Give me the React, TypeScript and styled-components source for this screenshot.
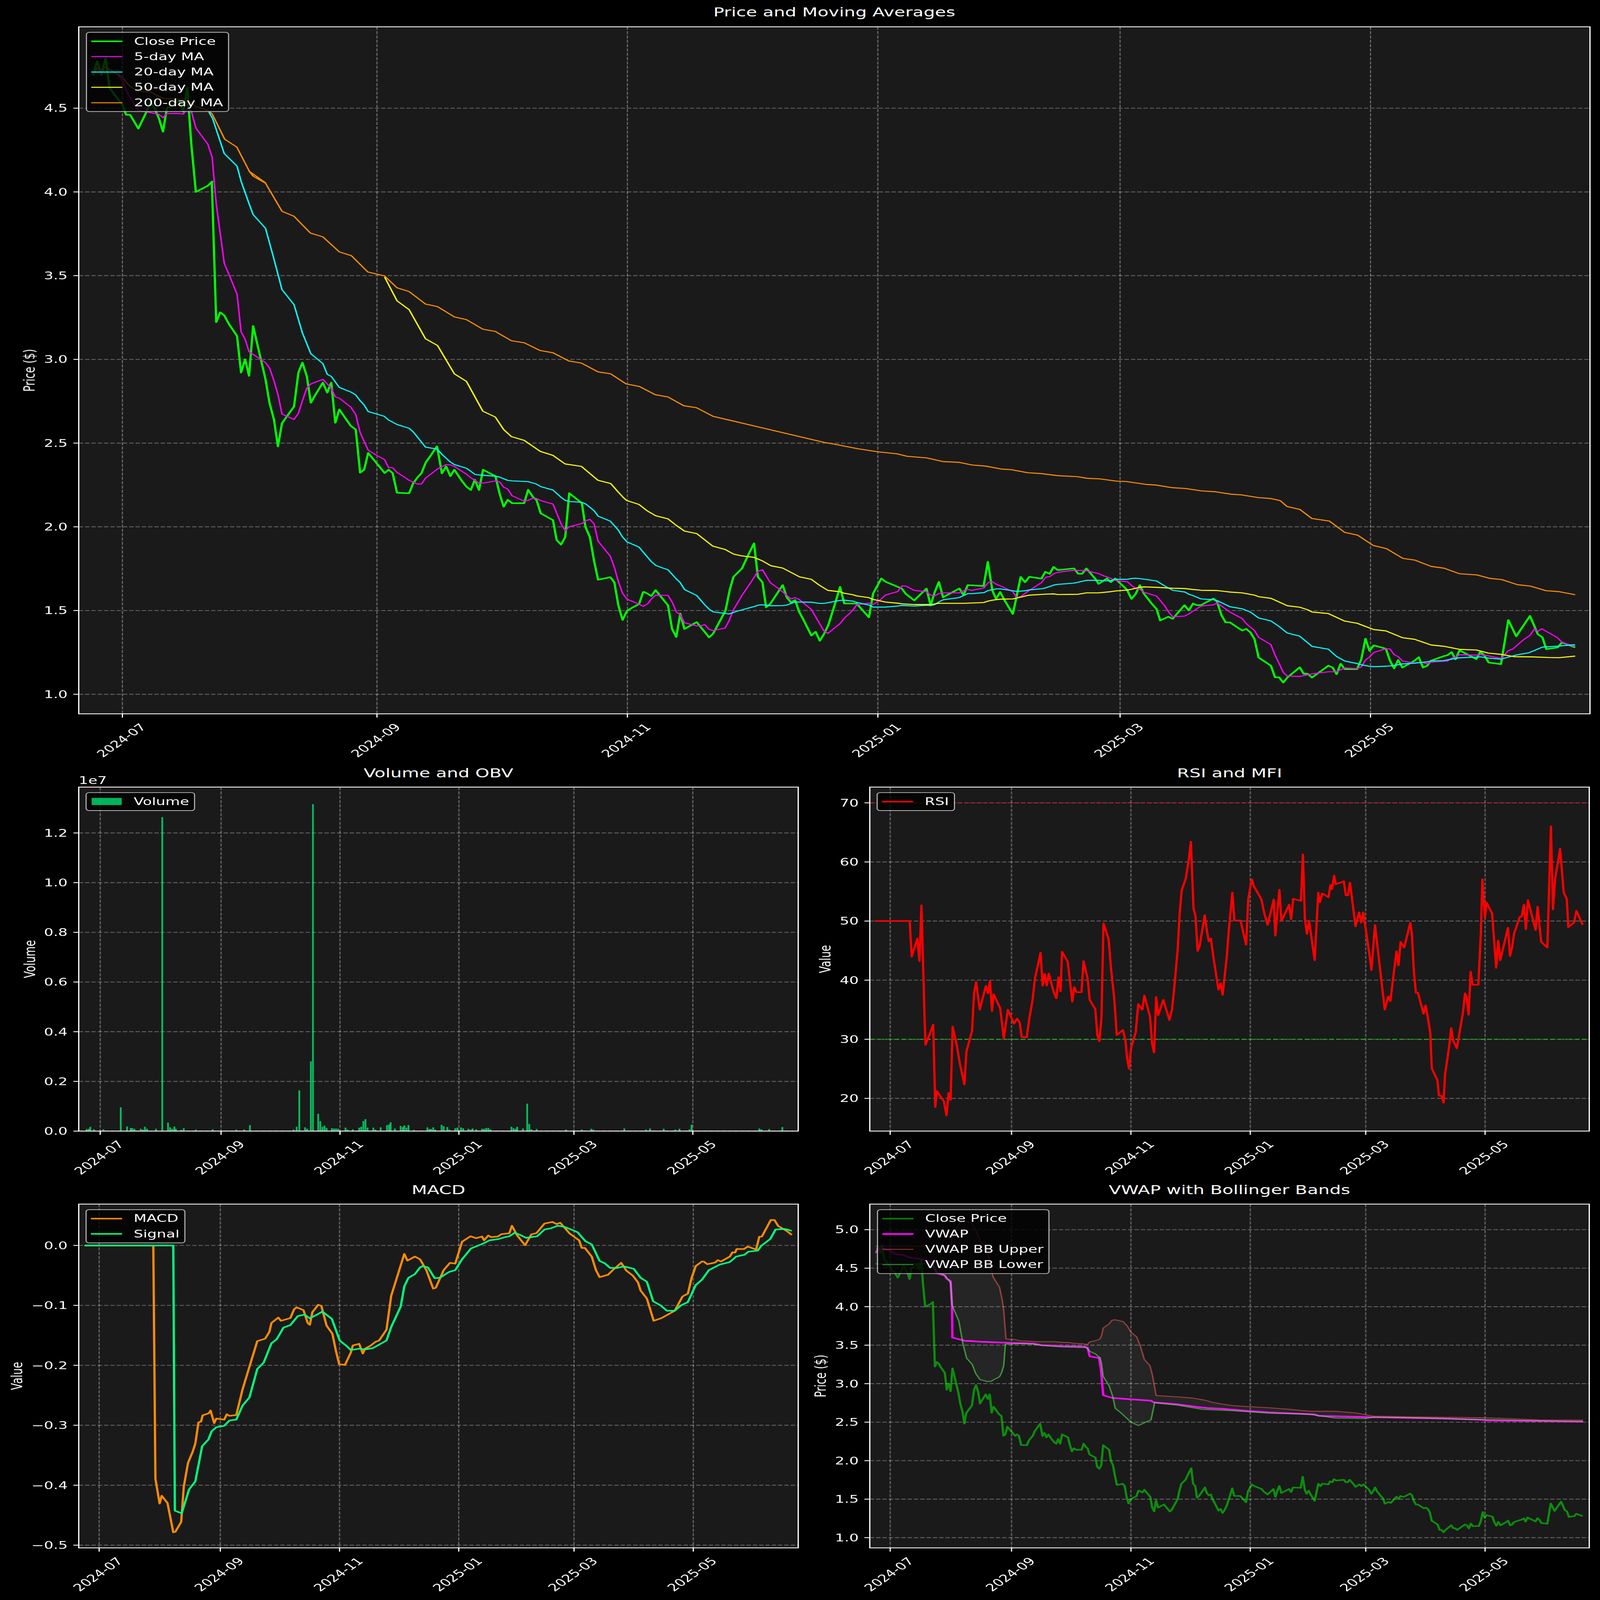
import type { ReactNode } from 'react';
import styled, { createGlobalStyle } from 'styled-components';

type Pt = [number, number];

const DESIGN_WIDTH = 4470;
const DESIGN_HEIGHT = 6507;

// Series are traced off the source figure, in page pixels. Each view is a crop with its own scale.
const view = (ox: number, oy: number, sx: number, sy: number) => (pts: string): Pt[] =>
  pts
    .trim()
    .split(/\s+/)
    .map(p => {
      const [x, y] = p.split(',').map(Number);
      return [ox + x / sx, oy + y / sy] as Pt;
    });

const topLeft = view(0, 0, 1.4255, 1.96);
const topMid = view(400, 400, 0.98, 0.98);
const topWide = view(1600, 1800, 0.5463, 1.206);
const topA = view(1050, 1850, 1.96, 1.96);
const topB = view(1800, 2100, 1.96, 1.96);
const topC = view(2600, 2100, 1.96, 1.96);
const topD = view(3400, 2100, 1.96, 1.96);
const midLeft = view(0, 3050, 0.6817, 0.8711);
const midRight = view(2230, 3050, 0.7, 0.8711);
const lowLeft = view(0, 4780, 0.6817, 0.9079);
const lowRight = view(2230, 4780, 0.7, 0.9079);
const lowZoom = view(2420, 4880, 1.96, 1.96);

const close: Pt[] = [
  ...topLeft('370,600 387,487 404,598 421,460 436,700 470,790 487,830 502,915 518,915 551,1025 580,905 600,815 617,870 633,945 649,1050 665,860 681,845 714,800 730,890 746,700 762,1150 780,1530 828,1480 845,1447'),
  ...topMid('188,332 200,892 211,853 222,865 235,900 257,947 268,1093 279,1040 290,1106 301,907 335,1120 346,1215 358,1280 369,1387 380,1295 413,1228 425,1093 436,1053 448,1107 459,1213 470,1185 492,1133 504,1173 515,1133 526,1293 537,1240 568,1305 582,1320 594,1492 605,1480 616,1413 661,1493'),
  ...topA('48,145 70,118 92,145 116,302 182,306 205,225 228,180 250,145 273,62 335,-68 362,147 385,92 408,170 430,118 470,205 497,255 520,280 542,198 565,280 587,118 655,170 678,310 700,413 722,358 746,385 812,385 834,278 858,332 880,360 903,466 970,520 990,678 1014,715 1037,655 1059,305 1128,385 1148,575 1172,655 1195,845 1217,995 1284,975 1306,1015 1328,1200 1351,1316 1375,1243 1410,1213 1441,1190 1464,1093'),
  ...topB('0,603 20,618 38,635 62,588 85,630 130,710 152,897 175,962 197,775 220,898 287,843 355,965 377,935 445,750 468,585 488,483 535,415 570,305 601,215 622,483 647,525 667,725 690,697 758,548 780,645 803,685 826,668 848,760 870,820 915,950 938,920 961,992 985,935 1008,865 1048,680 1072,562 1095,695 1163,695 1230,805 1253,615 1298,495 1322,522 1410,575 1432,618 1478,670 1545,575'),
  ...topC('0,710 22,605 45,522 68,645 157,575 180,628 203,548 290,555 313,362 338,590 358,658 381,603 405,670 450,778 472,630 493,483 517,525 540,482 607,496 628,442 652,458 673,403 696,428 785,415 808,457 830,457 853,415 900,495 920,538 965,495 987,525 1010,495 1075,585 1100,658 1123,617 1145,548 1168,617 1213,700 1237,738 1257,830 1302,800 1325,817 1390,708 1413,750 1437,695 1458,708 1480,708 1548,655'),
  ...topD('0,680 25,790 47,845 70,845 138,910 160,897 183,925 205,977 228,1125 295,1190 318,1283 340,1283 363,1325 385,1285 453,1203 475,1255 497,1255 520,1285 610,1190 633,1205 655,1258 677,1175 700,1218 767,1218 790,1140 813,975 835,1072 858,1028 925,1055 947,1150 970,1212 992,1145 1015,1205 1082,1150 1105,1122 1128,1205 1150,1192 1172,1150 1240,1115 1262,1107 1285,1082 1306,1140 1328,1068 1420,1138 1442,1080 1465,1110 1487,1165 1555,1178'),
  ...topWide('1428,870 1440,950 1461,850 1473,940 1480,955 1486,1013 1503,1005 1510,980 1530,1005'),
];

const ma5: Pt[] = [
  ...topLeft('470,600 487,640 510,750 551,880 632,910 649,938 665,905 715,905 730,910 746,860 762,885 780,1020 828,1150 845,1255'),
  ...topMid('200,420 222,657 257,780 268,930 279,960 290,1010 335,1053 346,1075 358,1125 369,1180 380,1258 413,1280 425,1255 436,1205 448,1155 459,1138 492,1120 515,1155 526,1190 537,1195 568,1230 582,1260 594,1332 616,1402'),
  ...topA('0,0 48,38 70,102 92,102 116,140 160,180 182,203 228,232 250,232 273,183 295,160 340,110 385,77 408,80 430,92 497,155 520,182 565,225 587,225 655,208 678,215 700,257 722,272 746,326 812,368 834,362 858,347 880,347 903,364 970,392 1014,548 1037,605 1059,572 1128,547 1150,525 1172,514 1195,550 1217,688 1284,808 1306,895 1328,1010 1351,1103 1375,1150 1441,1190 1464,1207 1488,1188 1508,1150 1532,1118'),
  ...topB('130,630 155,690 175,760 197,785 220,848 287,873 310,872 331,863 355,902 377,910 443,890 465,830 488,745 535,630 600,490 622,438 647,425 690,528 715,555 735,575 760,605 803,658 826,648 848,662 915,742 960,855 983,912 1005,933 1072,855 1095,812 1140,752 1163,705 1230,691 1253,702 1297,660 1321,627 1387,600 1410,555 1432,555 1478,590 1545,600'),
  ...topC('0,628 22,635 45,615 68,610 157,610 180,592 203,583 225,590 292,570 315,528 338,520 360,542 381,553 450,600 472,650 493,640 540,590 607,528 630,485 652,480 673,458 696,446 785,430 830,432 853,433 920,456 945,473 965,482 1010,510 1078,522 1100,550 1123,575 1145,580 1168,605 1237,635 1280,710 1302,760 1325,800 1390,795 1413,778 1437,755 1480,715 1548,705'),
  ...topD('0,690 25,715 70,762 138,815 160,855 205,910 228,965 295,1022 318,1105 363,1243 385,1273 453,1276 520,1255 610,1239 655,1238 700,1208 767,1213 790,1200 813,1145 835,1122 858,1085 925,1055 947,1057 970,1102 992,1118 1015,1153 1082,1170 1120,1163 1150,1175 1172,1162 1262,1153 1285,1130 1306,1122 1328,1103 1420,1106 1442,1102 1487,1112 1555,1133'),
  ...topWide('1428,1020 1435,1012 1450,970 1461,945 1468,913 1473,925 1479,913 1503,957 1510,980 1530,1000'),
];

const ma20: Pt[] = [
  ...topMid('180,55 190,80 222,220 257,270 268,330 290,420 301,463 335,518 358,640 380,762 413,822 436,935 459,1018 492,1057 504,1100 515,1108 537,1152 568,1170 582,1182 594,1205 605,1222 616,1248 660,1267 672,1282 695,1300 728,1315 740,1330 762,1370 773,1390 805,1398'),
  ...topA('365,0 408,57 430,77 497,107 543,155 565,160 655,170 678,177 722,203 746,207 834,213 880,233 903,253 970,280 1014,338 1037,362 1059,371 1128,378 1150,392 1195,445 1217,488 1284,528 1328,600 1351,655 1375,693 1441,735 1508,850 1532,880 1568,900'),
  ...topB('130,426 175,498 197,528 220,583 287,631 331,705 355,740 377,761 465,778 510,755 600,720 625,707 647,705 692,713 758,711 781,707 826,682 915,684 960,694 983,694 1072,670 1095,668 1140,675 1163,685 1230,707 1253,723 1321,723 1387,715 1410,710 1478,715 1545,709'),
  ...topC('0,711 22,703 45,682 68,665 157,647 203,616 225,616 292,608 315,591 360,578 381,578 473,598 517,593 540,586 607,577 630,570 673,548 696,542 785,532 808,525 853,510 920,510 965,514 987,512 1010,502 1078,502 1100,495 1123,493 1145,496 1237,515 1280,553 1325,589 1392,603 1413,620 1437,632 1480,658 1548,664'),
  ...topD('0,671 70,720 138,737 183,763 228,810 295,833 340,878 385,930 453,955 520,1036 610,1059 655,1117 700,1153 767,1173 790,1183 835,1195 858,1198 925,1195 970,1189 1015,1176 1082,1170 1150,1160 1172,1153 1240,1150 1285,1138 1328,1127 1420,1122 1442,1120 1487,1130 1555,1138'),
  ...topWide('1440,1042 1460,1030 1480,1003 1505,998 1525,992 1530,992'),
];

const ma50: Pt[] = [
  ...topMid('661,712 695,807 728,842 773,958 806,985 852,1098 885,1128 930,1247 964,1270 987,1320 1008,1348 1043,1363 1087,1407 1122,1423 1155,1457 1200,1467 1245,1522 1280,1535 1300,1568'),
  ...topA('1352,335 1373,363 1441,395 1487,447 1532,485'),
  ...topB('130,20 175,72 220,117 287,137 375,237 443,264 488,300 530,314 601,327 647,355 692,393 758,412 805,448 850,482 915,502 960,550 1005,590 1072,601 1095,613 1140,624 1163,634 1230,648 1253,662 1321,683 1387,692 1410,697 1478,703'),
  ...topC('0,703 45,693 180,693 290,687 315,675 338,668 381,660 450,658 540,628 630,620 673,618 696,623 808,621 853,610 920,610 987,600 1010,595 1078,587 1100,581 1145,565 1168,562 1237,566 1325,573 1392,575 1437,583 1480,589'),
  ...topD('0,591 70,603 138,610 205,628 228,640 295,653 318,668 385,712 453,724 497,745 520,762 610,775 700,835 767,852 858,902 925,913 1015,967 1082,980 1172,1025 1240,1035 1328,1060 1420,1065 1487,1090 1555,1100'),
  ...topWide('1437,1050 1465,1051 1490,1054 1505,1055 1530,1047'),
];

const ma200: Pt[] = [
  ...topLeft('370,600 387,540 404,560 421,535 487,615 518,690 551,725 600,733 650,785 698,790 745,795 780,850 828,880 845,908 895,1110 943,1172 993,1365 1009,1405 1058,1458'),
  ...topMid('290,290 301,310 335,338 380,450 413,470 458,537 492,552 537,612 570,627 615,692 661,708 695,755 728,770 773,820 806,830 852,871 885,882 930,920 964,929 1008,966 1043,974 1087,1005 1122,1014 1166,1047 1200,1055 1245,1090 1280,1098 1322,1138 1358,1148 1402,1181 1437,1190 1480,1225 1515,1233 1560,1267'),
  ...topWide('385,0 400,8 435,30 465,45 495,55 510,67 540,75 565,93 590,97 610,110 630,115 655,130 670,133 695,148 715,152 740,162 770,167 785,175 805,178 830,189 845,191 875,205 890,208 915,221 935,225 960,237 980,241 1005,253 1020,256 1047,270 1065,274 1080,285 1090,313 1110,328 1128,372 1155,385 1178,440 1198,454 1222,505 1242,520 1267,568 1285,576 1310,607 1330,616 1353,643 1380,649 1400,666 1418,672 1442,697 1462,704 1485,726 1505,731 1530,746'),
];

const volumeBars = midLeft(
  '165,1343 169,1342 172,1335 179,1344 197,1344 230,1266 242,1334 249,1339 252,1340 256,1342 268,1342 272,1345 276,1335 280,1342 297,1342 309,238 320,1320 324,1337 328,1342 332,1334 335,1342 345,1346 350,1340 373,1345 405,1344 450,1345 465,1345 476,1329 559,1345 565,1335 570,1206 581,1337 585,1342 592,1103 596,192 606,1289 610,1315 614,1335 618,1331 622,1339 632,1340 636,1341 640,1341 644,1342 658,1338 662,1345 672,1344 684,1338 688,1335 692,1315 696,1308 700,1338 711,1338 715,1345 725,1337 737,1329 741,1327 744,1319 752,1341 763,1332 767,1336 770,1330 774,1338 778,1329 788,1346 814,1337 818,1343 821,1343 825,1337 829,1345 841,1328 845,1333 852,1336 856,1345 867,1340 871,1338 878,1337 882,1340 892,1342 896,1345 900,1341 907,1344 918,1342 922,1342 926,1339 930,1339 934,1344 974,1335 978,1340 982,1342 985,1335 996,1341 1004,1253 1008,1325 1012,1344 1022,1343 1078,1345 1108,1345 1126,1342 1130,1345 1189,1341 1230,1345 1238,1341 1264,1342 1286,1345 1294,1342 1313,1344 1317,1328 1446,1341 1450,1344 1465,1343 1490,1336',
);

const rsi = midRight(
  '150,606 218,606 222,732 233,668 237,748 241,550 247,945 249,1045 257,1008 264,973 268,1265 271,1208 285,1245 290,1295 294,1215 298,1240 302,980 310,1045 316,1110 325,1185 329,1068 340,995 344,860 348,822 355,920 367,836 371,862 375,818 379,925 382,865 395,915 402,1022 410,920 422,970 428,952 433,965 437,1017 447,1018 452,950 458,890 463,810 474,718 478,835 482,793 486,835 490,792 500,860 505,880 509,805 513,855 516,715 527,750 536,892 540,840 544,858 554,858 558,748 566,810 570,885 581,918 585,1010 589,1032 593,950 597,614 607,670 612,780 618,880 623,1010 635,992 640,1030 643,1090 647,1130 651,1055 660,1000 665,900 673,920 677,870 688,945 692,1040 696,1072 700,875 704,940 714,885 726,957 731,920 735,850 742,710 746,580 750,497 758,455 764,385 768,325 773,560 777,590 781,712 785,695 795,585 800,650 803,678 807,668 812,735 822,850 826,826 830,868 838,735 842,640 849,505 853,604 865,604 876,690 880,530 887,458 891,482 906,530 911,575 918,620 930,530 933,658 941,495 945,606 960,548 964,600 968,527 983,535 987,370 991,600 995,652 999,605 1010,745 1017,505 1020,540 1025,508 1037,522 1041,478 1044,493 1048,445 1051,476 1067,465 1071,515 1075,515 1079,470 1090,625 1097,575 1101,612 1105,575 1118,735 1121,780 1128,620 1135,730 1147,920 1154,873 1158,890 1170,713 1174,763 1178,680 1185,700 1197,612 1200,650 1204,785 1208,860 1212,860 1223,935 1227,905 1231,945 1236,1000 1239,1128 1250,1170 1253,1225 1258,1225 1262,1250 1265,1150 1273,1050 1277,985 1281,1030 1288,1057 1300,930 1304,862 1307,875 1311,938 1315,785 1319,832 1330,832 1335,650 1338,458 1343,595 1346,540 1357,580 1365,772 1369,675 1373,745 1388,630 1392,730 1396,700 1400,650 1411,592 1415,590 1419,548 1423,635 1427,532 1442,638 1446,555 1453,680 1465,700 1472,270 1476,565 1480,460 1490,350 1497,505 1503,528 1506,628 1517,612 1522,570 1534,620',
);

const macd = lowLeft(
  '161,259 292,259 296,1120 304,1212 308,1183 319,1210 330,1318 334,1316 345,1280 350,1150 358,1062 367,1020 372,990 378,912 383,909 386,886 398,878 401,868 408,915 412,898 427,902 432,882 437,888 450,885 462,790 475,707 490,612 505,603 513,578 517,545 530,525 535,537 553,527 560,495 565,487 578,498 586,545 590,552 595,505 606,478 612,482 622,555 633,585 640,650 646,697 657,700 668,655 672,628 684,622 691,658 695,640 705,630 715,615 722,610 736,570 745,445 770,290 776,315 790,300 800,310 812,350 825,418 830,415 845,350 857,323 867,326 880,245 896,225 907,232 918,226 922,240 930,222 935,228 948,226 955,217 970,214 975,186 985,222 1000,258 1012,218 1022,213 1037,178 1052,172 1060,180 1067,175 1085,215 1103,240 1108,268 1114,268 1127,300 1135,350 1142,376 1158,367 1167,350 1183,323 1193,352 1205,370 1215,395 1220,425 1232,455 1245,537 1260,527 1285,500 1300,447 1310,437 1317,380 1325,335 1337,318 1340,318 1347,328 1362,322 1367,313 1373,318 1390,300 1395,284 1400,285 1403,272 1417,272 1424,263 1440,274 1446,227 1451,226 1468,165 1475,165 1482,187 1498,205 1508,220',
);

const signal = lowLeft(
  '161,259 330,259 333,1238 346,1248 360,1160 372,1130 385,1000 397,975 403,945 412,930 427,925 437,905 450,902 462,850 475,820 490,715 502,692 517,620 527,605 540,562 553,553 567,520 580,514 590,528 605,513 614,503 632,530 647,610 660,630 668,645 685,640 695,643 710,638 736,610 745,560 763,485 770,410 778,378 790,365 800,340 805,335 815,340 828,380 838,378 855,357 867,350 880,310 897,270 920,252 932,240 950,235 962,228 970,225 980,212 993,222 1002,231 1023,225 1037,200 1050,195 1062,186 1075,190 1100,210 1115,243 1127,255 1142,316 1152,325 1162,342 1175,342 1188,336 1207,345 1220,378 1232,393 1244,465 1258,480 1270,500 1285,500 1297,480 1310,468 1325,405 1337,385 1350,350 1370,330 1390,320 1402,300 1418,293 1425,282 1443,278 1450,260 1467,235 1477,200 1495,198 1508,205',
);

const vwap: Pt[] = [
  ...lowZoom('52,422 70,393 85,383 130,403 152,425 175,435 205,441 235,458 300,470 360,497 385,583 430,603 440,627 462,647 470,850 472,1097 540,1123 580,1125 620,1130 745,1137 915,1145 960,1157 1075,1165 1190,1168 1212,1178 1224,1247 1275,1260 1285,1350 1298,1557'),
  ...lowRight('615,822 650,827 690,832 695,838 740,845 780,855 800,859 830,862 880,870 920,875 1010,883 1018,888 1100,892 1120,893 1200,896 1260,898 1340,903 1345,905 1470,908 1535,910'),
];

const bbUpper: Pt[] = [
  ...lowZoom('52,368 400,368 465,360 470,275 510,190 520,160 580,185 600,240 625,325 660,390 695,615 730,695 745,800 753,880 765,1105 775,1110 815,1113 845,1123 880,1125 930,1130 1030,1130 1075,1135 1105,1136 1150,1144 1180,1146 1212,1152 1224,1131 1255,1122 1278,1110 1288,1085 1298,1020 1330,988 1345,960 1362,955 1407,970 1430,1005 1450,1055 1480,1090 1500,1160 1523,1272'),
  ...lowRight('688,703 693,740 700,813 750,819 770,822 795,830 810,838 830,845 850,850 880,854 920,858 960,864 1000,871 1050,871 1090,877 1125,889 1200,892 1300,894 1340,895 1400,899 1450,903 1535,904'),
];

const bbLower: Pt[] = [
  ...lowZoom('52,510 360,510 385,570 430,600 462,660 470,840 507,965 530,1150 550,1262 580,1310 600,1385 623,1432 665,1448 685,1445 700,1432 730,1410 742,1375 753,1320 762,1150 850,1145 915,1150 960,1160 1075,1172 1205,1177 1225,1208 1255,1227 1280,1258 1288,1300 1298,1408 1330,1482 1350,1568'),
  ...lowRight('620,860 630,875 650,910 665,924 690,903 697,840 740,848 790,864 850,869 920,878 1000,882 1050,896 1110,898 1125,893 1200,895 1340,902 1535,909'),
];

// same close series, moved from the top chart's scale onto the VWAP chart's scale
const closeOnVwap: Pt[] = close.map(([x, y]) => {
  const day = (x - 342) / 11.47;
  const price = 4.5 - (y - 440) / 681;
  return [2487 + day * 5.467, 5001 + (5 - price) * 313.1];
});

const MONTHS = [
  { label: '2024-07', day: 0 },
  { label: '2024-09', day: 62 },
  { label: '2024-11', day: 123 },
  { label: '2025-01', day: 184 },
  { label: '2025-03', day: 243 },
  { label: '2025-05', day: 304 },
];

const range = (from: number, step: number, count: number) =>
  Array.from({ length: count }, (_, i) => from + step * i);

const toPath = (pts: Pt[]) => pts.map(([x, y]) => `${x.toFixed(1)},${y.toFixed(1)}`).join(' ');

const GlobalStyle = createGlobalStyle`
  html, body {
    margin: 0;
    padding: 0;
    background: #000;
    overflow: hidden;
  }
`;

const Stage = styled.div`
  width: 100vw;
  height: 100vh;
  overflow: hidden;
`;

const Page = styled.div`
  width: ${DESIGN_WIDTH}px;
  height: ${DESIGN_HEIGHT}px;
  transform-origin: 0 0;
  display: grid;
  grid-template-columns: 2230px 2240px;
  grid-template-rows: 3086px 1697px 1724px;
  background: #000;
  color: #fff;
  font-family: 'DejaVu Sans', sans-serif;
`;

const Panel = styled.section<{ $wide?: boolean }>`
  display: flex;
  flex-direction: column;
  min-width: 0;
  min-height: 0;
  grid-column: ${({ $wide }) => ($wide ? 'span 2' : 'span 1')};
`;

const PanelTitle = styled.h2<{ $height: number; $start: number; $end: number; $lift?: number }>`
  flex: none;
  box-sizing: border-box;
  height: ${({ $height }) => $height}px;
  margin: 0;
  padding: 0 ${({ $end }) => $end}px ${({ $lift }) => $lift ?? 0}px ${({ $start }) => $start}px;
  display: flex;
  align-items: center;
  justify-content: center;
  font-size: 50px;
  font-weight: 400;
`;

const PlotArea = styled.div`
  position: relative;
  flex: 1;
  min-height: 0;
`;

const PlotSvg = styled.svg`
  display: block;
  width: 100%;
  height: 100%;
  overflow: visible;
`;

const PlotBackground = styled.rect`
  fill: #1a1a1a;
`;

const Spine = styled.rect`
  fill: none;
  stroke: #fff;
  stroke-width: 3.4;
`;

const GridLine = styled.line`
  stroke: rgba(255, 255, 255, 0.32);
  stroke-width: 3.4;
  stroke-dasharray: 12.3 5.3;
`;

const TickMark = styled.line`
  stroke: #fff;
  stroke-width: 3.4;
`;

const AxisText = styled.text`
  fill: #fff;
  font-family: 'DejaVu Sans', sans-serif;
  font-size: 41.67px;
`;

const YTickLabel = styled(AxisText)`
  text-anchor: end;
`;

const XTickLabel = styled(AxisText)`
  text-anchor: middle;
  dominant-baseline: central;
`;

const AxisLabel = styled(AxisText)`
  text-anchor: middle;
  dominant-baseline: central;
`;

const OffsetLabel = styled(AxisText)`
  dominant-baseline: central;
`;

const Trace = styled.polyline<{ $color: string; $width: number; $alpha?: number }>`
  fill: none;
  stroke: ${({ $color }) => $color};
  stroke-width: ${({ $width }) => $width};
  stroke-opacity: ${({ $alpha }) => $alpha ?? 1};
  stroke-linejoin: round;
`;

const Band = styled.polygon`
  fill: rgba(255, 255, 255, 0.05);
`;

const VolumeBar = styled.rect`
  fill: #00ff7f;
  fill-opacity: 0.7;
`;

const LevelLine = styled.line<{ $color: string }>`
  stroke: ${({ $color }) => $color};
  stroke-opacity: 0.5;
  stroke-width: 4.2;
  stroke-dasharray: 15.4 6.7;
`;

const Legend = styled.div<{ $left: number }>`
  position: absolute;
  top: 21px;
  left: ${({ $left }) => $left}px;
  box-sizing: border-box;
  display: flex;
  flex-direction: column;
  gap: 20.8px;
  padding: 14px 14px 14px 11.5px;
  background: rgba(0, 0, 0, 0.8);
  border: 3.6px solid rgba(255, 255, 255, 0.7);
  border-radius: 10px;
`;

const LegendRow = styled.div`
  display: flex;
  align-items: center;
  height: 41.67px;
  font-size: 41.67px;
  line-height: 41.67px;
  white-space: nowrap;
`;

const LegendLine = styled.span<{ $color: string; $width: number; $alpha?: number }>`
  flex: none;
  width: 87px;
  height: ${({ $width }) => $width}px;
  margin-right: 33px;
  background: ${({ $color }) => $color};
  opacity: ${({ $alpha }) => $alpha ?? 1};
`;

const LegendPatch = styled.span`
  flex: none;
  width: 84px;
  height: 29px;
  margin: 0 34px 0 2px;
  background: #00ff7f;
  opacity: 0.7;
`;

type Box = { left: number; top: number; right: number; bottom: number };
type YTick = { label: string; y: number };

type ChartProps = {
  title: string;
  wide?: boolean;
  originX: number;
  originY: number;
  width: number;
  height: number;
  titleHeight: number;
  titleLift?: number;
  plot: Box;
  xZero: number;
  xPerDay: number;
  yTicks: YTick[];
  yLabel: string;
  yLabelX: number;
  offsetLabel?: string;
  legend: ReactNode;
  children: ReactNode;
};

const Chart = ({
  title,
  wide,
  originX,
  originY,
  width,
  height,
  titleHeight,
  titleLift,
  plot,
  xZero,
  xPerDay,
  yTicks,
  yLabel,
  yLabelX,
  offsetLabel,
  legend,
  children,
}: ChartProps) => {
  const plotTop = originY + titleHeight;
  const midY = (plot.top + plot.bottom) / 2;

  return (
    <Panel $wide={wide}>
      <PanelTitle
        $height={titleHeight}
        $lift={titleLift}
        $start={plot.left - originX}
        $end={originX + width - plot.right}
      >
        {title}
      </PanelTitle>
      <PlotArea>
        <PlotSvg viewBox={`${originX} ${plotTop} ${width} ${height - titleHeight}`} preserveAspectRatio="xMinYMin">
          <PlotBackground
            x={plot.left}
            y={plot.top}
            width={plot.right - plot.left}
            height={plot.bottom - plot.top}
          />
          {MONTHS.map(({ label, day }) => {
            const x = xZero + day * xPerDay;
            const labelY = plot.bottom + 108;
            return (
              <g key={label}>
                <GridLine x1={x} x2={x} y1={plot.top} y2={plot.bottom} />
                <TickMark x1={x} x2={x} y1={plot.bottom} y2={plot.bottom + 15} />
                <XTickLabel x={x - 3} y={labelY} transform={`rotate(-45 ${x - 3} ${labelY})`}>
                  {label}
                </XTickLabel>
              </g>
            );
          })}
          {yTicks.map(({ label, y }) => (
            <g key={label}>
              <GridLine x1={plot.left} x2={plot.right} y1={y} y2={y} />
              <TickMark x1={plot.left - 15} x2={plot.left} y1={y} y2={y} />
              <YTickLabel x={plot.left - 31} y={y} dy="0.36em">
                {label}
              </YTickLabel>
            </g>
          ))}
          {children}
          <Spine
            x={plot.left}
            y={plot.top}
            width={plot.right - plot.left}
            height={plot.bottom - plot.top}
          />
          <AxisLabel x={yLabelX} y={midY} transform={`rotate(-90 ${yLabelX} ${midY})`}>
            {yLabel}
          </AxisLabel>
          {offsetLabel && (
            <OffsetLabel x={plot.left} y={plot.top - 26}>
              {offsetLabel}
            </OffsetLabel>
          )}
        </PlotSvg>
        {legend}
      </PlotArea>
    </Panel>
  );
};

const lineLegend = (left: number, items: { label: string; color: string; width: number; alpha?: number }[]) => (
  <Legend $left={left}>
    {items.map(({ label, color, width, alpha }) => (
      <LegendRow key={label}>
        <LegendLine $color={color} $width={width} $alpha={alpha} />
        {label}
      </LegendRow>
    ))}
  </Legend>
);

const App = () => {
  // the figure is laid out at its design size and fitted to whatever window it opens in
  const fit = `scale(${window.innerWidth / DESIGN_WIDTH}, ${window.innerHeight / DESIGN_HEIGHT})`;

  return (
    <Stage>
      <GlobalStyle />
      <Page style={{ transform: fit }}>
        <Chart
          wide
          title="Price and Moving Averages"
          originX={0}
          originY={0}
          width={4470}
          height={3086}
          titleHeight={109}
          titleLift={9}
          plot={{ left: 220, top: 109, right: 4442, bottom: 2903 }}
          xZero={342}
          xPerDay={11.47}
          yTicks={range(1, 0.5, 8).map(v => ({ label: v.toFixed(1), y: 440 + (4.5 - v) * 681 }))}
          yLabel="Price ($)"
          yLabelX={83}
          legend={lineLegend(240, [
            { label: 'Close Price', color: '#00ff00', width: 6.25 },
            { label: '5-day MA', color: '#ff00ff', width: 4.2 },
            { label: '20-day MA', color: '#00ffff', width: 4.2 },
            { label: '50-day MA', color: '#ffff00', width: 4.2 },
            { label: '200-day MA', color: '#ff8c00', width: 4.2 },
          ])}
        >
          <Trace points={toPath(close)} $color="#00ff00" $width={6.25} />
          <Trace points={toPath(ma5)} $color="#ff00ff" $width={4.2} />
          <Trace points={toPath(ma20)} $color="#00ffff" $width={4.2} />
          <Trace points={toPath(ma50)} $color="#ffff00" $width={4.2} />
          <Trace points={toPath(ma200)} $color="#ff8c00" $width={4.2} />
        </Chart>

        <Chart
          title="Volume and OBV"
          originX={0}
          originY={3086}
          width={2230}
          height={1697}
          titleHeight={115}
          plot={{ left: 220, top: 3201, right: 2230, bottom: 4600 }}
          xZero={280}
          xPerDay={5.446}
          yTicks={range(0, 0.2, 7).map(v => ({ label: v.toFixed(1), y: 4600 - v * 1010.4 }))}
          yLabel="Volume"
          yLabelX={84}
          offsetLabel="1e7"
          legend={
            <Legend $left={239}>
              <LegendRow>
                <LegendPatch />
                Volume
              </LegendRow>
            </Legend>
          }
        >
          {volumeBars.map(([x, y]) => (
            <VolumeBar key={x} x={x - 2.5} y={y} width={5} height={4600 - y} />
          ))}
        </Chart>

        <Chart
          title="RSI and MFI"
          originX={2230}
          originY={3086}
          width={2240}
          height={1697}
          titleHeight={115}
          plot={{ left: 2430, top: 3201, right: 4440, bottom: 4600 }}
          xZero={2487}
          xPerDay={5.467}
          yTicks={range(20, 10, 6).map(v => ({ label: String(v), y: 4467 - (v - 20) * 24.04 }))}
          yLabel="Value"
          yLabelX={2306}
          legend={lineLegend(219, [{ label: 'RSI', color: '#ff0000', width: 6.25 }])}
        >
          <LevelLine $color="#ff0000" x1={2430} x2={4440} y1={3265} y2={3265} />
          <LevelLine $color="#00ff00" x1={2430} x2={4440} y1={4227} y2={4227} />
          <Trace points={toPath(rsi)} $color="#ff0000" $width={6.25} />
        </Chart>

        <Chart
          title="MACD"
          originX={0}
          originY={4783}
          width={2230}
          height={1724}
          titleHeight={114}
          plot={{ left: 220, top: 4897, right: 2230, bottom: 6295 }}
          xZero={277}
          xPerDay={5.46}
          yTicks={range(0, 1, 6).map(i => ({
            label: i === 0 ? '0.0' : `\u2212${(i / 10).toFixed(1)}`,
            y: 5065 + i * 243.8,
          }))}
          yLabel="Value"
          yLabelX={48}
          legend={lineLegend(239, [
            { label: 'MACD', color: '#ff8c00', width: 6.25 },
            { label: 'Signal', color: '#00ff7f', width: 6.25 },
          ])}
        >
          <Trace points={toPath(macd)} $color="#ff8c00" $width={6.25} />
          <Trace points={toPath(signal)} $color="#00ff7f" $width={6.25} />
        </Chart>

        <Chart
          title="VWAP with Bollinger Bands"
          originX={2230}
          originY={4783}
          width={2240}
          height={1724}
          titleHeight={114}
          plot={{ left: 2430, top: 4897, right: 4440, bottom: 6295 }}
          xZero={2487}
          xPerDay={5.467}
          yTicks={range(1, 0.5, 9).map(v => ({ label: v.toFixed(1), y: 5001 + (5 - v) * 313.1 }))}
          yLabel="Price ($)"
          yLabelX={2293}
          legend={lineLegend(220, [
            { label: 'Close Price', color: '#00ff00', width: 6.25, alpha: 0.5 },
            { label: 'VWAP', color: '#ff00ff', width: 6.5 },
            { label: 'VWAP BB Upper', color: '#ff5a5a', width: 4.2, alpha: 0.5 },
            { label: 'VWAP BB Lower', color: '#5aff5a', width: 4.2, alpha: 0.5 },
          ])}
        >
          <Trace points={toPath(closeOnVwap)} $color="#00ff00" $width={6.25} $alpha={0.5} />
          <Trace points={toPath(vwap)} $color="#ff00ff" $width={6.5} />
          <Trace points={toPath(bbUpper)} $color="#ff5a5a" $width={4.2} $alpha={0.5} />
          <Trace points={toPath(bbLower)} $color="#5aff5a" $width={4.2} $alpha={0.5} />
          <Band points={toPath([...bbUpper, ...[...bbLower].reverse()])} />
        </Chart>
      </Page>
    </Stage>
  );
};

export default App;
